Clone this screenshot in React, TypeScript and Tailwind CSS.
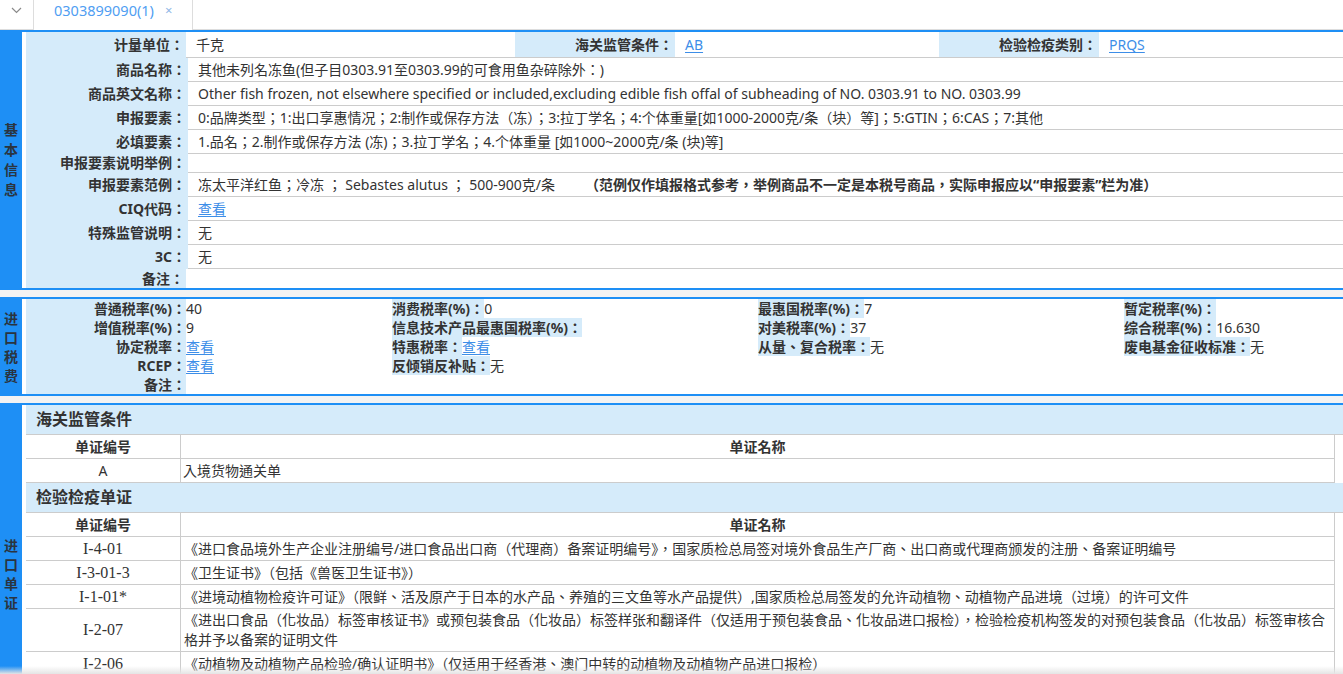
import React from "react";

const BLUE = "border-[#1e8ff5]";

function SideBar({ text, leading }: { text: string; leading: string }) {
  return (
    <div className="w-[22px] shrink-0 bg-[#1e8ff5] flex items-center justify-center">
      <div className={`flex flex-col items-center text-[14px] font-bold text-[#2a3440] ${leading}`}>
        {text.split("").map((c, i) => (
          <span key={i}>{c}</span>
        ))}
      </div>
    </div>
  );
}

function Link({ children }: { children: React.ReactNode }) {
  return <span className="text-[#3d8ee8] underline underline-offset-2">{children}</span>;
}

type Row = { label: string; value: React.ReactNode; h: string; last?: boolean };

export default function App() {
  const rows: Row[] = [
    { label: "商品名称", value: "其他未列名冻鱼(但子目0303.91至0303.99的可食用鱼杂碎除外：)", h: "h-[23px] leading-[23px]" },
    {
      label: "商品英文名称",
      value: "Other fish frozen, not elsewhere specified or included,excluding edible fish offal of subheading of NO. 0303.91 to NO. 0303.99",
      h: "h-[23px] leading-[23px]",
    },
    {
      label: "申报要素",
      value: "0:品牌类型；1:出口享惠情况；2:制作或保存方法（冻）；3:拉丁学名；4:个体重量[如1000-2000克/条（块）等]；5:GTIN；6:CAS；7:其他",
      h: "h-[23px] leading-[23px]",
    },
    {
      label: "必填要素",
      value: "1.品名；2.制作或保存方法 (冻)；3.拉丁学名；4.个体重量 [如1000~2000克/条 (块)等]",
      h: "h-[23px] leading-[23px]",
    },
    { label: "申报要素说明举例", value: "", h: "h-[18px] leading-[18px]" },
    {
      label: "申报要素范例",
      value: (
        <>
          <span className="whitespace-pre">冻太平洋红鱼；冷冻 ； Sebastes alutus ； 500-900克/条</span>
          <span className="ml-[30px] font-bold">（范例仅作填报格式参考，举例商品不一定是本税号商品，实际申报应以“申报要素”栏为准）</span>
        </>
      ),
      h: "h-[23px] leading-[23px]",
    },
    { label: "CIQ代码", value: <Link>查看</Link>, h: "h-[23px] leading-[23px]" },
    { label: "特殊监管说明", value: "无", h: "h-[23px] leading-[23px]" },
    { label: "3C", value: "无", h: "h-[23px] leading-[23px]" },
    { label: "备注", value: "", h: "h-[19px] leading-[19px]", last: true },
  ];

  const g1 = [
    { l: "普通税率(%)：", v: "40" },
    { l: "增值税率(%)：", v: "9" },
    { l: "协定税率：", v: <Link>查看</Link> },
    { l: "RCEP：", v: <Link>查看</Link> },
    { l: "备注：", v: "" },
  ];
  const g2 = [
    { l: "消费税率(%)：", v: "0" },
    { l: "信息技术产品最惠国税率(%)：", v: "" },
    { l: "特惠税率：", v: <Link>查看</Link> },
    { l: "反倾销反补贴：", v: "无" },
  ];
  const g3 = [
    { l: "最惠国税率(%)：", v: "7" },
    { l: "对美税率(%)：", v: "37" },
    { l: "从量、复合税率：", v: "无" },
  ];
  const g4 = [
    { l: "暂定税率(%)：", v: "" },
    { l: "综合税率(%)：", v: "16.630" },
    { l: "废电基金征收标准：", v: "无" },
  ];

  const group = (items: { l: string; v: React.ReactNode }[], w: string) => (
    <div className={`${w} flex flex-col`}>
      {items.map((it, i) => (
        <div key={i} className="h-[19px] leading-[19px] whitespace-nowrap">
          <span className="inline-block h-[19px] bg-[#d5ebfa] font-bold">{it.l}</span>
          <span>{it.v}</span>
        </div>
      ))}
    </div>
  );

  const certs = [
    {
      code: "I-4-01",
      name: "《进口食品境外生产企业注册编号/进口食品出口商（代理商）备案证明编号》，国家质检总局签对境外食品生产厂商、出口商或代理商颁发的注册、备案证明编号",
    },
    { code: "I-3-01-3", name: "《卫生证书》（包括《兽医卫生证书》）" },
    {
      code: "I-1-01*",
      name: "《进境动植物检疫许可证》（限鲜、活及原产于日本的水产品、养殖的三文鱼等水产品提供）,国家质检总局签发的允许动植物、动植物产品进境（过境）的许可文件",
    },
    {
      code: "I-2-07",
      name: "《进出口食品（化妆品）标签审核证书》或预包装食品（化妆品）标签样张和翻译件（仅适用于预包装食品、化妆品进口报检），检验检疫机构签发的对预包装食品（化妆品）标签审核合格并予以备案的证明文件",
    },
    { code: "I-2-06", name: "《动植物及动植物产品检验/确认证明书》（仅适用于经香港、澳门中转的动植物及动植物产品进口报检）" },
  ];

  const headRow = (
    <div className="flex border-b border-[#cccccc] h-[24px] leading-[23px] font-bold">
      <div className="w-[155px] shrink-0 text-center border-r border-[#cccccc]">单证编号</div>
      <div className="flex-1 text-center border-r border-[#cccccc]">单证名称</div>
    </div>
  );

  return (
    <div className="w-[1343px] min-h-[674px] bg-white text-[14px] text-[#333333] font-['Noto_Sans','Noto_Sans_CJK_TC',sans-serif] overflow-hidden">
      {/* tab bar */}
      <div className="flex h-[30px]">
        <div className="w-[33px] h-[30px] border-b border-[#dddddd] flex justify-center pt-[7px]">
          <svg width="11" height="7" viewBox="0 0 11 7" fill="none">
            <path d="M1 1l4.5 4.5L10 1" stroke="#8a8a8a" strokeWidth="1.2" />
          </svg>
        </div>
        <div className="w-[160px] h-[30px] border-x border-[#dddddd] flex items-start pl-[20px] text-[14.5px] leading-[21px] text-[#4f9ef2]">
          <span>0303899090(1)</span>
          <span className="ml-[11px] text-[13px] text-[#8fb6e6]">×</span>
        </div>
        <div className="flex-1 h-[30px] border-b border-[#dddddd]" />
      </div>

      {/* section 1 */}
      <div className={`flex border-y-2 ${BLUE}`}>
        <SideBar text="基本信息" leading="leading-[20px]" />
        <div className="ml-[4px] flex-1 flex flex-col">
          <div className="flex h-[26px]">
            <div className="w-[160px] shrink-0 bg-[#d5ebfa] text-right font-bold leading-[25px] pr-[2px]">计量单位：</div>
            <div className="flex-1 flex border-b border-[#cccccc]">
              <div className="w-[329px] pl-[10px] leading-[25px]">千克</div>
              <div className="w-[160px] bg-[#d5ebfa] text-right font-bold leading-[25px] pr-[2px]">海关监管条件：</div>
              <div className="w-[264px] pl-[10px] leading-[25px]">
                <Link>AB</Link>
              </div>
              <div className="w-[160px] bg-[#d5ebfa] text-right font-bold leading-[25px] pr-[2px]">检验检疫类别：</div>
              <div className="flex-1 pl-[10px] leading-[25px]">
                <Link>PRQS</Link>
              </div>
            </div>
          </div>
          {rows.map((r, i) => (
            <div key={i} className="flex">
              <div className={`w-[160px] shrink-0 bg-[#d5ebfa] text-right font-bold pr-[2px] ${r.h} ${r.last ? "" : "box-content pb-[1px]"}`}>
                {r.label}：
              </div>
              <div className={`flex-1 pl-[10px] whitespace-nowrap ${r.h} ${r.last ? "" : "box-content border-b border-[#cccccc]"}`}>
                {r.value}
              </div>
            </div>
          ))}
        </div>
      </div>

      <div className="h-[7px] bg-[#f3f3f3]" />

      {/* section 2 */}
      <div className={`flex border-y-2 ${BLUE}`}>
        <SideBar text="进口税费" leading="leading-[19px]" />
        <div className="ml-[4px] flex-1 flex">
          <div className="w-[160px] shrink-0 bg-[#d5ebfa] flex flex-col">
            {g1.map((it, i) => (
              <div key={i} className="h-[19px] leading-[19px] text-right font-bold whitespace-nowrap">
                {it.l}
              </div>
            ))}
          </div>
          <div className="w-[206px] flex flex-col">
            {g1.map((it, i) => (
              <div key={i} className="h-[19px] leading-[19px]">
                {it.v}
              </div>
            ))}
          </div>
          {group(g2, "w-[366px]")}
          {group(g3, "w-[366px]")}
          {group(g4, "flex-1")}
        </div>
      </div>

      <div className="h-[7px] bg-[#f3f3f3]" />

      {/* section 3 */}
      <div className={`flex border-t-2 ${BLUE} min-h-[340px]`}>
        <SideBar text="进口单证" leading="leading-[19px]" />
        <div className="ml-[4px] flex-1 flex flex-col">
          <div className="h-[30px] bg-[#d5ebfa] border-b border-[#cccccc] pl-[10px] text-[16px] font-semibold leading-[29px] text-[#333333]">
            海关监管条件
          </div>
          <div className="w-[1309px]">
            {headRow}
            <div className="flex border-b border-[#cccccc] min-h-[24px]">
              <div className="w-[155px] shrink-0 text-center border-r border-[#cccccc] leading-[23px]">A</div>
              <div className="flex-1 pl-[2px] border-r border-[#cccccc] leading-[23px]">入境货物通关单</div>
            </div>
          </div>
          <div className="h-[30px] bg-[#d5ebfa] border-b border-[#cccccc] pl-[10px] text-[16px] font-semibold leading-[29px] text-[#333333]">
            检验检疫单证
          </div>
          <div className="w-[1309px]">
            {headRow}
            {certs.map((c, i) => (
              <div key={i} className="flex border-b border-[#cccccc]">
                <div className="w-[155px] shrink-0 flex items-center justify-center border-r border-[#cccccc] font-['Liberation_Serif',serif] text-[16px] leading-[20px]">
                  {c.code}
                </div>
                <div className="flex-1 min-h-[23px] flex items-center pl-[3px] pr-[1px] py-[1px] leading-[20px] border-r border-[#cccccc]">
                  <span>{c.name}</span>
                </div>
              </div>
            ))}
          </div>
        </div>
      </div>

      <div className="fixed left-0 bottom-0 w-full h-[8px] bg-gradient-to-b from-transparent to-[#e4e4e4] pointer-events-none" />
    </div>
  );
}
